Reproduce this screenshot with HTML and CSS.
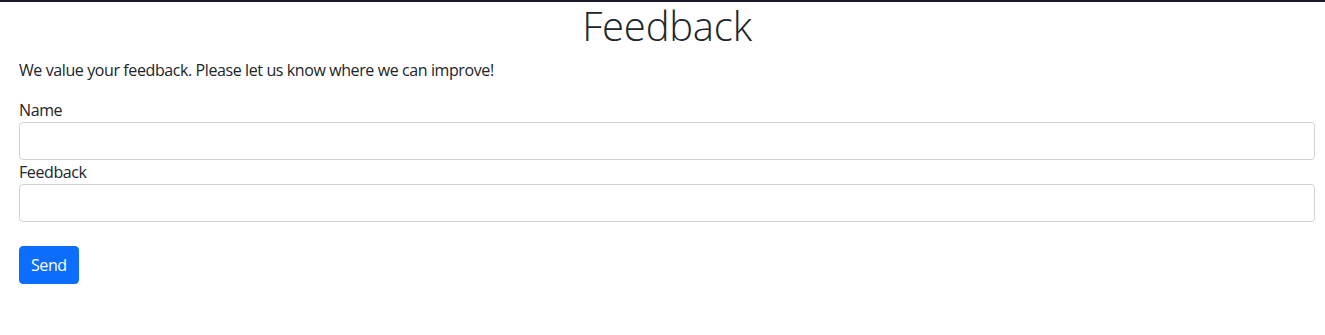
FILE: index.html
```html
<!DOCTYPE html>
<html lang="en">
<head>
    <meta charset="UTF-8">
    <title>Feedback</title>
    <link rel="stylesheet" href="styles.css">
</head>
<body>
<div class="topbar"></div>
<div class="page">
    <h1 class="biaoti">Feedback</h1>
    <p class="intro">We value your feedback. Please let us know where we can improve!</p>
    <form class="form">
        <label for="name" class="label">Name</label>
        <input type="text" id="name" class="input">
        <label for="feedback" class="label">Feedback</label>
        <input type="text" id="feedback" class="input">
        <button type="button" class="send">Send</button>
    </form>
</div>
</body>
</html>
```

FILE: styles.css
```css
*{
    padding: 0;
    margin: 0;
    box-sizing: border-box;
}
body{
    font-family: "Open Sans", "Noto Sans", sans-serif;
    font-size: 16px;
    line-height: 1.5;
    letter-spacing: -0.4px;
    color: #212529;
    background: #fff;
}
.topbar{
    height: 2px;
    background-color: #1c1a28;
}
.page{
    padding: 0 10px 0 19px;
}
.biaoti{
    font-size: 40px;
    font-weight: 300;
    line-height: 1.2;
    letter-spacing: -0.2px;
    text-align: center;
    margin-bottom: 8px;
}
.intro{
    margin-bottom: 16px;
}
.form{
    display: flex;
    flex-direction: column;
    align-items: flex-start;
}
.label{
    display: block;
}
.input{
    width: 100%;
    height: 38px;
    padding: 6px 12px;
    font: inherit;
    border: 1px solid #ced4da;
    border-radius: 4px;
}
.send{
    margin-top: 24px;
    height: 38px;
    padding: 6px 11px;
    font: inherit;
    letter-spacing: -0.4px;
    color: #fff;
    background-color: #0d6efd;
    border: 1px solid #0d6efd;
    border-radius: 4px;
    cursor: pointer;
}
```
